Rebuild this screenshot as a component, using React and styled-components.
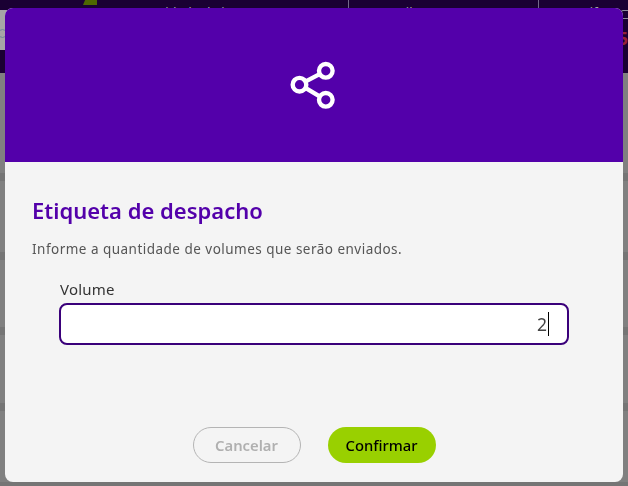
import styled, { createGlobalStyle } from 'styled-components';

const GlobalStyle = createGlobalStyle`
  html, body {
    margin: 0;
    height: 100%;
    overflow: hidden;
    background-color: #808080;
    font-family: 'Noto Sans', 'Open Sans', sans-serif;
  }
`;

// the page behind the modal, colours already dimmed as in the screenshot
const Page = styled.div`
  display: flex;
  flex-direction: column;
  height: 486px;
  overflow: hidden;
`;

const TopBar = styled.nav`
  display: flex;
  flex: none;
  height: 10px;
  overflow: hidden;
  background-color: #1a0033;
`;

const Brand = styled.div`
  display: flex;
  flex: none;
  justify-content: flex-end;
  width: 97px;
`;

const BrandMark = styled.span`
  display: block;
  width: 14px;
  height: 5px;
  background-color: #4d6800;
  clip-path: polygon(15% 0, 100% 0, 100% 100%, 0 100%);
`;

const NavItem = styled.div`
  flex: none;
  width: ${props => props.$width}px;
  height: 8px;
  padding-left: ${props => props.$indent}px;
  box-sizing: border-box;
  overflow: hidden;
  border-right: ${props => (props.$divider ? '1px solid #74698a' : 'none')};
  font-size: 13px;
  line-height: 24px;
  white-space: nowrap;
  color: #a8a8a8;
`;

const SubBar = styled.div`
  display: flex;
  flex: none;
  justify-content: space-between;
  height: 40px;
  background-color: #1a0033;
`;

const FilterCell = styled.div`
  display: flex;
  align-items: center;
  width: 120px;
  padding-top: 6px;
  box-sizing: border-box;
  background-color: #a6a6a6;
`;

const Glyph = styled.span`
  display: block;
  width: 7px;
  height: 7px;
  margin-left: -2px;
  border: 1px solid #6f8799;
  border-radius: 50%;
`;

const StatusCell = styled.div`
  display: flex;
  flex-direction: column;
  justify-content: space-between;
  align-items: flex-end;
  width: 20px;
`;

const StatusIcon = styled.span`
  display: block;
  width: 8px;
  height: 7px;
  margin-right: -3px;
  border: 1px solid #8d8d9c;
  border-radius: 2px;
`;

const Alert = styled.span`
  font-size: 18px;
  font-weight: 700;
  line-height: 24px;
  color: #96203a;
`;

const TitleBar = styled.div`
  flex: none;
  height: 23px;
  background-color: #1a0033;
`;

const Table = styled.div`
  flex: 1;
  min-height: 0;
`;

const Row = styled.div`
  height: ${props => props.$height}px;
  box-sizing: border-box;
  border-bottom: 8px solid #757575;
`;

const Overlay = styled.div`
  position: fixed;
  inset: 0;
  display: flex;
  justify-content: center;
  align-items: flex-start;
  padding-top: 8px;
`;

const Modal = styled.div`
  display: flex;
  flex-direction: column;
  width: 618px;
  height: 474px;
  overflow: hidden;
  border-radius: 8px;
  background-color: #f4f4f4;
`;

const ModalHeader = styled.header`
  display: flex;
  flex: none;
  align-items: center;
  justify-content: center;
  height: 154px;
  background-color: #5300aa;
`;

const ModalBody = styled.div`
  display: flex;
  flex: 1;
  flex-direction: column;
  padding: 33px 27px 19px;
`;

const Title = styled.h2`
  margin: 0;
  font-size: 22px;
  font-weight: 600;
  line-height: 30px;
  color: #5300aa;
`;

const Description = styled.p`
  margin: 14px 0 0;
  font-size: 13.5px;
  line-height: 20px;
  letter-spacing: 0.48px;
  color: #555555;
`;

const FieldGroup = styled.div`
  display: flex;
  flex-direction: column;
  gap: 4px;
  margin: 20px 27px 0;
`;

const Label = styled.label`
  padding-left: 1px;
  font-size: 15px;
  line-height: 20px;
  letter-spacing: 0.2px;
  color: #333333;
`;

const Input = styled.div`
  display: flex;
  align-items: center;
  justify-content: flex-end;
  height: 42px;
  padding-right: 18px;
  box-sizing: border-box;
  border: 2px solid #3a007a;
  border-radius: 8px;
  background-color: #ffffff;
  font-size: 17.5px;
  color: #444444;
`;

const Caret = styled.span`
  width: 1px;
  height: 24px;
  margin-left: 1px;
  background-color: #000000;
`;

const Actions = styled.div`
  display: flex;
  justify-content: center;
  gap: 27px;
  margin-top: auto;
`;

const Button = styled.button`
  width: 108px;
  height: 36px;
  padding: 0;
  box-sizing: border-box;
  border: ${props => (props.$primary ? 'none' : '1px solid #b4b4b4')};
  border-radius: 18px;
  background-color: ${props => (props.$primary ? '#99d000' : 'transparent')};
  font-family: inherit;
  font-size: 14.8px;
  font-weight: ${props => (props.$primary ? 500 : 600)};
  color: ${props => (props.$primary ? '#000000' : '#b0b0b0')};
`;

const ShareIcon = () => (
  <svg width="50" height="50" viewBox="0 0 50 50" fill="none" stroke="#ffffff" strokeWidth="4.4">
    <circle cx="10.5" cy="24.7" r="6.8" />
    <circle cx="36.8" cy="10.8" r="6.8" />
    <circle cx="36.8" cy="39.8" r="6.8" />
    <path d="M16.8 21.4 30.6 14.1M16.8 28.2 30.6 36.4" />
  </svg>
);

const App = () => {
  return (
    <>
      <GlobalStyle />
      <Page>
        <TopBar>
          <Brand>
            <BrandMark />
          </Brand>
          <NavItem $width={252} $indent={30} $divider>
            Quantidade de impressão
          </NavItem>
          <NavItem $width={190} $indent={50} $divider>
            Liberação
          </NavItem>
          <NavItem $width={90} $indent={32}>
            Tarifas
          </NavItem>
        </TopBar>
        <SubBar>
          <FilterCell>
            <Glyph />
          </FilterCell>
          <StatusCell>
            <StatusIcon />
            <Alert>5</Alert>
          </StatusCell>
        </SubBar>
        <TitleBar />
        <Table>
          <Row $height={108} />
          <Row $height={79} />
          <Row $height={75} />
          <Row $height={76} />
          <Row $height={79} />
        </Table>
      </Page>
      <Overlay>
        <Modal>
          <ModalHeader>
            <ShareIcon />
          </ModalHeader>
          <ModalBody>
            <Title>Etiqueta de despacho</Title>
            <Description>Informe a quantidade de volumes que serão enviados.</Description>
            <FieldGroup>
              <Label>Volume</Label>
              <Input>
                2
                <Caret />
              </Input>
            </FieldGroup>
            <Actions>
              <Button>Cancelar</Button>
              <Button $primary>Confirmar</Button>
            </Actions>
          </ModalBody>
        </Modal>
      </Overlay>
    </>
  );
};

export default App;
